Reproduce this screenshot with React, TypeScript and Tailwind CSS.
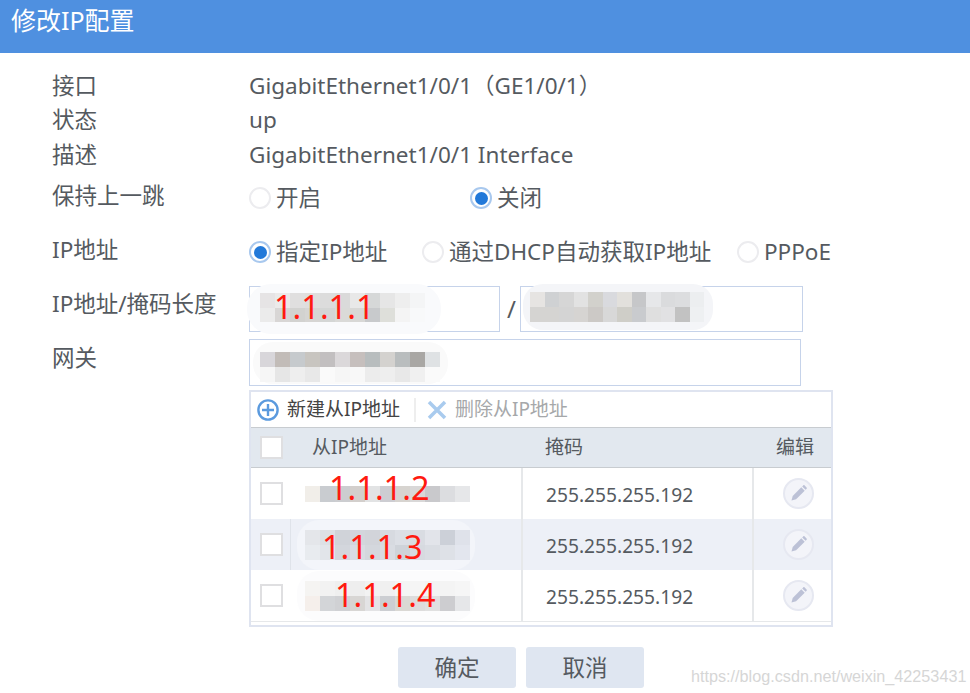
import React from "react";

const FONT = { fontFamily: '"Noto Sans", "Noto Sans CJK SC", sans-serif' };

// --------- Mosaic data (the blurred out addresses) ---------

const INPUT_1 = [
  ["#e6e4e5", "#ebeaea", "#e0dfdf", "#dfdedd", "#dcdcdc", "#dadada", "#e8e8e8", "#d6d8d8", "#e6e6e6", "#eeeeee", "#f4f5f6"],
  ["#ebebeb", "#d8d6d5", "#d2d2d0", "#d6d5d3", "#d4d6d5", "#dadad8", "#d8d8d6", "#c8cacc", "#dedfda", "#f4f4f4", "#f8f9fa"],
];
const INPUT_2 = [
  ["#e6e4e2", "#cfd1d3", "#d6d6d6", "#e2e2e2", "#d2d1cc", "#d9dade", "#e2e0dc", "#c6c7c9", "#e6e7e9", "#dadbdd", "#dcdddf", "#eceef0"],
  ["#d5d4d2", "#d5d4d2", "#d4d4d4", "#d6d4d2", "#ccc9c6", "#d8d8d8", "#cfcec8", "#c9cbce", "#dfdfdf", "#e1e1e3", "#c2c2c2", "#eef0f2"],
];
const GATEWAY = [
  ["#d8d6da", "#c2bcb8", "#c6cacd", "#c8c5c0", "#c2bfc0", "#dbd8da", "#c6bfbd", "#b8bdbe", "#d4d2cf", "#b9bdbe", "#a9a7a4", "#dfe2e4"],
  ["#f6f6f6", "#e6e6e6", "#eeeeee", "#e8e8e8", "#fafafa", "#f6f6f6", "#f8f8f8", "#ececec", "#eeeeee", "#e8e8e8", "#f0f0f0", "#fafafa"],
];
const ROW_1 = [["#f1eee9", "#c9ccd0", "#cccdd0", "#d3cfcc", "#e2e3e4", "#cdcdd2", "#d7d4d0", "#d9d8d8", "#c9c9cc", "#dcdde0", "#e6e7e9"]];
const ROW_2 = [
  ["#e4e6ea", "#dde0e5", "#d0d3d9", "#d3d6dc", "#d2d4da", "#d7dae0", "#dcdfe5", "#d9dce2", "#e2e4ea", "#ccd0d8", "#dfe2ea"],
  ["#e8ebef", "#e2e5ea", "#d3d6dc", "#d9dce2", "#d4d7dd", "#d9dce2", "#cfd3d9", "#d7dae0", "#dadde3", "#dee1e7", "#e3e6ee"],
];
const ROW_3 = [
  ["#f5f4f2", "#f2f2f2", "#efefef", "#eeeeee", "#f2f2f2", "#f0f0f0", "#f4f4f4", "#f5f5f5", "#f3f3f3", "#f4f4f4", "#f6f6f6"],
  ["#f5efeb", "#d3d5d8", "#d0d1d4", "#d8d6d4", "#e3e3e5", "#ccced2", "#dad8d4", "#dddcdc", "#e0e0e0", "#cdcdd0", "#e6e7e9"],
];

const ROWS = [
  { mosaic: ROW_1, ip: "1.1.1.2", pos: "left-[38px] top-[-3px]", halo: "", striped: false },
  { mosaic: ROW_2, ip: "1.1.1.3", pos: "left-[31px] top-[5px]", halo: "bg-[#f3f5fa]", striped: true },
  { mosaic: ROW_3, ip: "1.1.1.4", pos: "left-[44px] top-[2px]", halo: "bg-[#fcfcfd]", striped: false },
];

function Mosaic({ rows, cell, h }: { rows: string[][]; cell: number; h: number }) {
  return (
    <div className="flex flex-col">
      {rows.map((r, i) => (
        <div key={i} className="flex">
          {r.map((c, j) => (
            <div key={j} style={{ width: cell, height: h, backgroundColor: c }} />
          ))}
        </div>
      ))}
    </div>
  );
}

function Radio({ checked, label, width }: { checked?: boolean; label: string; width: string }) {
  return (
    <div className={`flex items-center gap-[5px] ${width}`}>
      {checked ? (
        <span className="flex h-[22px] w-[22px] items-center justify-center rounded-full border-2 border-[#a8c8ee] bg-white">
          <span className="h-[13px] w-[13px] rounded-full bg-[#2279d9]" />
        </span>
      ) : (
        <span className="h-[22px] w-[22px] rounded-full border-2 border-[#ececef] bg-white" />
      )}
      <span className="whitespace-nowrap">{label}</span>
    </div>
  );
}

function Checkbox() {
  return <span className="block h-[23px] w-[23px] border-2 border-[#dfdfe1] bg-white" />;
}

function FormRow({
  label,
  height,
  labelClass = "",
  children,
}: {
  label: string;
  height: string;
  labelClass?: string;
  children?: React.ReactNode;
}) {
  return (
    <div className={`flex ${height}`}>
      <div className={`w-[197px] shrink-0 whitespace-nowrap leading-[34px] ${labelClass}`}>{label}</div>
      <div className="min-w-0 flex-1">{children}</div>
    </div>
  );
}

function EditButton() {
  return (
    <span className="flex h-[31px] w-[31px] items-center justify-center rounded-full border-2 border-[#e6e8f1] bg-[#f3f4f9]">
      <svg width="19" height="19" viewBox="0 0 19 19">
        <path d="M2.5 16.5l1.2-4.6 8.6-8.6 3.4 3.4-8.6 8.6z" fill="#bcc1d6" />
        <path d="M13.2 2.4l1-1c.4-.4 1-.4 1.4 0l2 2c.4.4.4 1 0 1.4l-1 1z" fill="#bcc1d6" />
      </svg>
    </span>
  );
}

export default function App() {
  return (
    <div className="h-[693px] w-[970px] overflow-hidden bg-white text-[22.5px] text-[#555a60]" style={FONT}>
      {/* Title bar */}
      <div className="flex h-[53px] items-center bg-[#4f90e0] pb-[12px] pl-[11px] text-[25px] text-white">
        修改IP配置
      </div>

      {/* Form */}
      <div className="pl-[52px] pt-[16px]">
        <FormRow label="接口" height="h-[34px]">
          <div className="whitespace-nowrap leading-[34px]">GigabitEthernet1/0/1（GE1/0/1）</div>
        </FormRow>
        <FormRow label="状态" height="h-[35px]">
          <div className="leading-[34px]">up</div>
        </FormRow>
        <FormRow label="描述" height="h-[40px]">
          <div className="whitespace-nowrap leading-[34px]">GigabitEthernet1/0/1 Interface</div>
        </FormRow>
        <FormRow label="保持上一跳" height="h-[54px]" labelClass="pt-[1px]">
          <div className="flex h-[34px] items-center pt-[6px]">
            <Radio label="开启" width="w-[221px]" />
            <Radio checked label="关闭" width="w-[120px]" />
          </div>
        </FormRow>
        <FormRow label="IP地址" height="h-[54px]" labelClass="pt-[1px]">
          <div className="flex h-[34px] items-center pt-[6px]">
            <Radio checked label="指定IP地址" width="w-[173px]" />
            <Radio label="通过DHCP自动获取IP地址" width="w-[315px]" />
            <Radio label="PPPoE" width="w-[100px]" />
          </div>
        </FormRow>
        <FormRow label="IP地址/掩码长度" height="h-[53px]" labelClass="pt-[1px]">
          <div className="flex items-start">
            <div className="relative h-[46px] w-[251px] shrink-0 border border-[#c6d3ea]">
              <div className="absolute left-[-3px] top-[-3px] h-[50px] w-[194px] rounded-[24px] bg-[#f9fafc]" />
              <div className="absolute left-[10px] top-[6px]">
                <Mosaic rows={INPUT_1} cell={15} h={14.5} />
              </div>
              <div className="absolute left-[24px] top-[-5px] text-[32.5px] leading-[50px] text-[#ff1a10]">1.1.1.1</div>
            </div>
            <div className="flex h-[46px] w-[20px] shrink-0 items-center justify-center pl-[3px] text-[24px]">/</div>
            <div className="relative h-[46px] w-[283px] shrink-0 border border-[#c6d3ea]">
              <div className="absolute left-[2px] top-[-3px] h-[46px] w-[190px] rounded-[20px] bg-[#f4f5f8]" />
              <div className="absolute left-[9px] top-[5px]">
                <Mosaic rows={INPUT_2} cell={14.5} h={15} />
              </div>
            </div>
          </div>
        </FormRow>
        <FormRow label="网关" height="h-[51px]" labelClass="pt-[2px]">
          <div className="relative h-[47px] w-[552px] border border-[#c6d3ea]">
            <div className="absolute left-[3px] top-[2px] h-[42px] w-[195px] rounded-[20px] bg-[#fafafa]" />
            <div className="absolute left-[10px] top-[12px]">
              <Mosaic rows={GATEWAY} cell={15} h={15} />
            </div>
          </div>
        </FormRow>
      </div>

      {/* Secondary IP table */}
      <div className="ml-[249px] w-[584px] border-2 border-[#dfe4f0] text-[19px]">
        <div className="flex h-[35px] items-center pl-[6px]">
          <svg width="22" height="22" viewBox="0 0 22 22" fill="none" stroke="#5b9ade" strokeWidth="2.4">
            <circle cx="11" cy="11" r="9.6" />
            <path d="M11 5v12M5 11h12" />
          </svg>
          <span className="ml-[8px] text-[#444]">新建从IP地址</span>
          <span className="ml-[14px] h-[24px] w-[2px] bg-[#eeeeee]" />
          <svg className="ml-[10px]" width="22" height="22" viewBox="0 0 22 22" fill="none" stroke="#a9cbee" strokeWidth="3.5">
            <path d="M3 3l16 16M19 3L3 19" />
          </svg>
          <span className="ml-[7px] text-[#a6a8aa]">删除从IP地址</span>
        </div>
        <div className="flex h-[41px] items-center border-y border-[#c8ccd0] bg-[#e2e8ef]">
          <div className="w-[61px] pl-[9px]">
            <Checkbox />
          </div>
          <div className="w-[233px]">从IP地址</div>
          <div className="w-[231px]">掩码</div>
          <div>编辑</div>
        </div>
        {ROWS.map((row) => (
          <div
            key={row.ip}
            className={`flex h-[51px] items-center ${row.striped ? "bg-[#edf0f7]" : "bg-white"}`}
          >
            <div className={`flex h-full w-[40px] shrink-0 items-center pl-[9px] ${row.striped ? "border-r border-[#dfe3ea]" : ""}`}>
              <Checkbox />
            </div>
            <div className="relative flex h-full w-[232px] shrink-0 items-center border-r-2 border-[#e6e8ea] pl-[14px]">
              {row.halo && <div className={`absolute left-[6px] top-[1px] h-[50px] w-[178px] rounded-[22px] ${row.halo}`} />}
              <div className="relative">
                <Mosaic rows={row.mosaic} cell={15} h={row.mosaic.length > 1 ? 15 : 16} />
              </div>
              <div className={`absolute ${row.pos} text-[32.5px] leading-[46px] text-[#ff1a10]`}>{row.ip}</div>
            </div>
            <div className="flex h-full w-[231px] shrink-0 items-center border-r-2 border-[#e6e8ea] pl-[23px] pt-[3px] text-[19.2px]">
              255.255.255.192
            </div>
            <div className="flex flex-1 pl-[29px]">
              <EditButton />
            </div>
          </div>
        ))}
        <div className="h-[4px] border-t border-[#e6e8ea]" />
      </div>

      {/* Buttons */}
      <div className="ml-[398px] mt-[20px] flex gap-[10px]">
        <div className="flex h-[41px] w-[118px] shrink-0 items-center justify-center rounded-[3px] bg-[#dfe6f1]">确定</div>
        <div className="flex h-[41px] w-[118px] shrink-0 items-center justify-center rounded-[3px] bg-[#dfe6f1]">取消</div>
        <div
          className="ml-[37px] self-end whitespace-nowrap pb-[2px] text-[16.2px] leading-[20px] text-[#d6d6d6]"
          style={{ fontFamily: '"Liberation Sans", sans-serif' }}
        >
          https://blog.csdn.net/weixin_42253431
        </div>
      </div>
    </div>
  );
}
